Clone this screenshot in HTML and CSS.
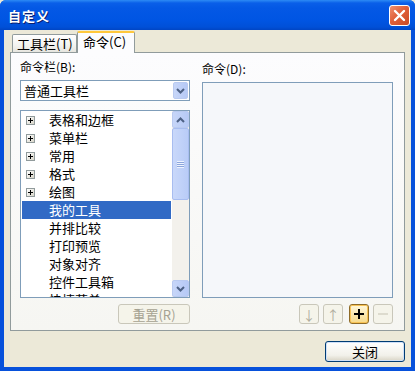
FILE: index.html
```html
<!DOCTYPE html>
<html>
<head>
<meta charset="utf-8">
<link rel="stylesheet" href="styles.css">
</head>
<body>
<div class="window">
  <div class="titlebar">
    <span class="title">自定义</span>
    <span class="close-btn">
      <svg width="19" height="19" viewBox="0 0 19 19"><path d="M5 5 L14 14 M14 5 L5 14" stroke="#fff" stroke-width="2.4" stroke-linecap="round"/></svg>
    </span>
  </div>
  <div class="client">
    <div class="tabs">
      <div class="tab">工具栏(<u>T</u>)</div>
      <div class="tab active">命令(<u>C</u>)</div>
    </div>
    <div class="panel">
      <div class="col left">
        <div class="label">命令栏(<u>B</u>):</div>
        <div class="combo">
          <span class="combo-text">普通工具栏</span>
          <span class="combo-btn">
            <svg width="9" height="6" viewBox="0 0 9 6"><path d="M1 1 L4.5 4.5 L8 1" stroke="#4D6185" stroke-width="2" fill="none"/></svg>
          </span>
        </div>
        <div class="listbox">
          <div class="items">
            <div class="item"><span class="plus"></span>表格和边框</div>
            <div class="item"><span class="plus"></span>菜单栏</div>
            <div class="item"><span class="plus"></span>常用</div>
            <div class="item"><span class="plus"></span>格式</div>
            <div class="item"><span class="plus"></span>绘图</div>
            <div class="item sel"><span class="noplus"></span>我的工具</div>
            <div class="item"><span class="noplus"></span>并排比较</div>
            <div class="item"><span class="noplus"></span>打印预览</div>
            <div class="item"><span class="noplus"></span>对象对齐</div>
            <div class="item"><span class="noplus"></span>控件工具箱</div>
            <div class="item"><span class="noplus"></span>快捷菜单</div>
          </div>
          <div class="scrollbar">
            <span class="sb-btn">
              <svg width="9" height="6" viewBox="0 0 9 6"><path d="M1 5 L4.5 1.5 L8 5" stroke="#4D6185" stroke-width="2" fill="none"/></svg>
            </span>
            <span class="sb-thumb"><span class="grip"></span></span>
            <span class="sb-track"></span>
            <span class="sb-btn">
              <svg width="9" height="6" viewBox="0 0 9 6"><path d="M1 1 L4.5 4.5 L8 1" stroke="#4D6185" stroke-width="2" fill="none"/></svg>
            </span>
          </div>
        </div>
        <div class="row-end">
          <div class="btn disabled reset">重置(<u>R</u>)</div>
        </div>
      </div>
      <div class="col right">
        <div class="label label-r">命令(<u>D</u>):</div>
        <div class="cmdbox"></div>
        <div class="row-end small-btns">
          <span class="sq disabled">↓</span>
          <span class="sq disabled">↑</span>
          <span class="sq hot">
            <svg width="12" height="12" viewBox="0 0 12 12"><path d="M6 1 V11 M1 6 H11" stroke="#000" stroke-width="2"/></svg>
          </span>
          <span class="sq disabled">
            <svg width="12" height="12" viewBox="0 0 12 12"><path d="M1 6 H11" stroke="#C5C2B2" stroke-width="1"/></svg>
          </span>
        </div>
      </div>
    </div>
    <div class="footer">
      <div class="btn close">关闭</div>
    </div>
  </div>
</div>
</body>
</html>
```

FILE: styles.css
```css
html, body {
  margin: 0;
  padding: 0;
  width: 415px;
  height: 371px;
  overflow: hidden;
  background: #ECE9D8;
}
body {
  font-family: "Noto Sans CJK SC", "DejaVu Sans", sans-serif;
  font-size: 12px;
  color: #000;
}
u { text-decoration: none; }
.window {
  width: 415px;
  height: 371px;
  box-sizing: border-box;
  background: #0751DB;
  display: flex;
  flex-direction: column;
  border-radius: 6px 6px 0 0;
  overflow: hidden;
}
.titlebar {
  height: 30px;
  flex: none;
  display: flex;
  align-items: center;
  justify-content: space-between;
  padding: 0 5px 0 8px;
  background: linear-gradient(#2D8BF5 0px, #0A5FE8 3px, #0458E5 8px, #0055E3 20px, #0050D8 27px, #0045C4 30px);
}
.title {
  color: #fff;
  font-weight: bold;
  font-size: 13px;
  letter-spacing: 1px;
  text-shadow: 1px 1px 0 #0A1E6E;
  margin-top: 1px;
}
.close-btn {
  width: 19px;
  height: 19px;
  border: 1px solid #fff;
  border-radius: 3px;
  background: linear-gradient(135deg, #F09070 0%, #E0603A 45%, #CC4A24 100%);
  display: flex;
  margin-top: 1px;
}
.client {
  flex: 1;
  margin: 0 4px 4px 4px;
  background: #ECE9D8;
  display: flex;
  flex-direction: column;
  padding: 2px 6px 0 6px;
}
.tabs {
  display: flex;
  align-items: flex-end;
  height: 20px;
  padding-left: 2px;
  position: relative;
  z-index: 1;
}
.tab {
  height: 17px;
  padding: 0 4px;
  border: 1px solid #919B9C;
  border-bottom: none;
  border-radius: 2px 2px 0 0;
  background: linear-gradient(#FFFFFF, #F3F3EF 60%, #E6E5DF);
  line-height: 18px;
  font-size: 13px;
  width: 55px;
  box-sizing: content-box;
  white-space: nowrap;
}
.tab.active {
  height: 20px;
  width: 46px;
  padding: 0 5px;
  margin-bottom: -1px;
  border-top: 2px solid #FFC83C;
  background: #FCFCFE;
  line-height: 18px;
}
.panel {
  height: 279px;
  border: 1px solid #919B9C;
  background: linear-gradient(#FCFCFE, #F6F6F2);
  display: flex;
  padding: 0 11px 0 9px;
  gap: 12px;
  box-sizing: border-box;
}
.col {
  display: flex;
  flex-direction: column;
}
.col.left { width: 170px; }
.col.right { width: 191px; }
.label {
  height: 26px;
  line-height: 28px;
  font-size: 12px;
  margin-bottom: 1px;
}
.label-r {
  margin-top: 2px;
  height: 26px;
}
.combo {
  height: 19px;
  border: 1px solid #7F9DB9;
  background: #fff;
  display: flex;
  align-items: center;
  justify-content: space-between;
  padding: 0 1px 0 3px;
}
.combo-text {
  font-size: 13px;
  line-height: 19px;
}
.combo-btn, .sb-btn {
  width: 15px;
  height: 17px;
  box-sizing: border-box;
  border: 1px solid #B9CAF0;
  border-radius: 2px;
  background: linear-gradient(90deg, #C7D6F8, #B6C9F6);
  display: flex;
  align-items: center;
  justify-content: center;
}
.listbox {
  margin-top: 9px;
  height: 188px;
  border: 1px solid #7F9DB9;
  background: #fff;
  display: flex;
  box-sizing: border-box;
  overflow: hidden;
}
.items {
  flex: 1;
  padding: 0 1px;
  overflow: hidden;
}
.item {
  height: 18px;
  line-height: 18px;
  font-size: 13px;
  display: flex;
  align-items: center;
  white-space: nowrap;
}
.item.sel {
  background: #316AC5;
  color: #fff;
}
.plus, .noplus {
  width: 9px;
  height: 9px;
  margin: 0 14px 0 4px;
  flex: none;
  box-sizing: border-box;
}
.plus {
  border: 1px solid #919B9C;
  background:
    linear-gradient(#000, #000) center / 5px 1px no-repeat,
    linear-gradient(#000, #000) center / 1px 5px no-repeat,
    linear-gradient(135deg, #fff, #D8D5C8);
}
.scrollbar {
  width: 17px;
  flex: none;
  display: flex;
  flex-direction: column;
  background: #F3F1EC;
}
.sb-btn { width: 17px; height: 17px; flex: none; }
.sb-thumb {
  height: 72px;
  flex: none;
  box-sizing: border-box;
  border: 1px solid #A8BDF0;
  border-radius: 2px;
  background: linear-gradient(90deg, #C9D8FA, #B9CCF7);
  display: flex;
  align-items: center;
  justify-content: center;
}
.grip {
  width: 7px;
  height: 7px;
  background: repeating-linear-gradient(#EEF3FE 0 1px, #8CA6DC 1px 2px);
}
.sb-track { flex: 1; }
.row-end {
  display: flex;
  justify-content: flex-end;
  margin-top: 6px;
}
.btn {
  height: 21px;
  box-sizing: border-box;
  border: 1px solid #003C74;
  border-radius: 3px;
  background: linear-gradient(#FFFFFF, #F2F1EA 70%, #D8D4C5);
  display: flex;
  align-items: center;
  justify-content: center;
  font-size: 13px;
}
.btn.disabled {
  border-color: #C9C7BA;
  color: #A5A292;
  background: #F5F4EA;
}
.reset { width: 72px; height: 20px; }
.cmdbox {
  height: 216px;
  box-sizing: border-box;
  border: 1px solid #7F9DB9;
  background: #F5F7FA;
}
.small-btns { gap: 4px; }
.sq {
  width: 20px;
  height: 20px;
  box-sizing: border-box;
  border: 1px solid #C9C7BA;
  border-radius: 3px;
  background: #F5F4EA;
  color: #B0AD9E;
  display: flex;
  align-items: center;
  justify-content: center;
  font-size: 13px;
}
.sq.hot {
  border: 1px solid #8E6B28;
  background: linear-gradient(#FFF8DC, #F7D988);
  box-shadow: inset 0 0 0 1px #F8C355;
  margin-left: 2px;
}
.footer {
  display: flex;
  justify-content: flex-end;
  margin-top: 10px;
}
.close {
  width: 80px;
  height: 21px;
  border-color: #003C74;
  box-shadow: inset 0 0 0 1px #CFE0F8;
}
```
